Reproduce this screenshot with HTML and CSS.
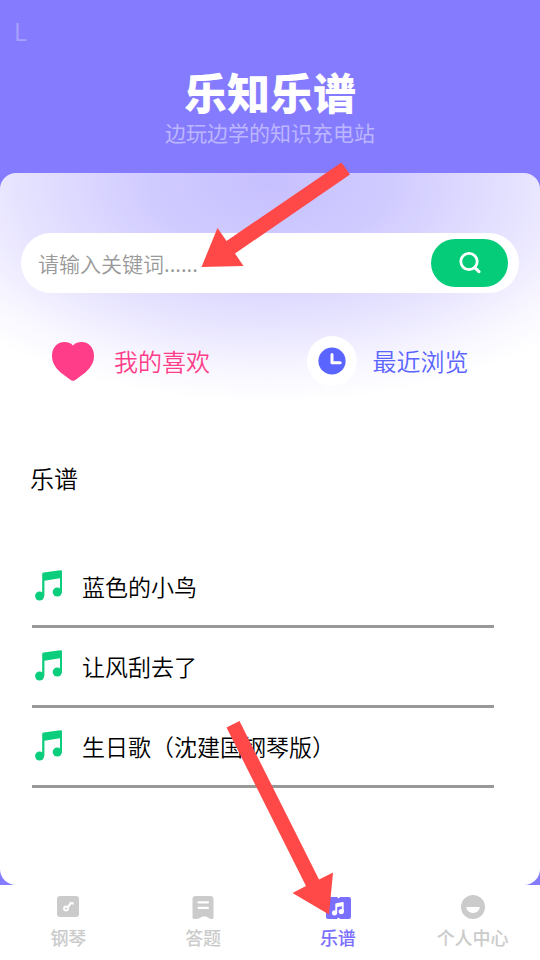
FILE: index.html
```html
<!DOCTYPE html>
<html lang="zh-CN">
<head>
<meta charset="utf-8">
<meta name="viewport" content="width=device-width, initial-scale=1">
<title>乐知乐谱</title>
<link rel="stylesheet" href="styles.css">
</head>
<body>
<div class="app">
  <header class="header">
    <span class="mark">L</span>
    <h1 class="title">乐知乐谱</h1>
    <p class="subtitle">边玩边学的知识充电站</p>
  </header>

  <main class="panel">
    <form class="search">
      <input class="search-input" type="text" placeholder="请输入关键词......" aria-label="请输入关键词">
      <button class="search-button" type="button" aria-label="搜索">
        <svg width="24" height="24" viewBox="0 0 24 24" fill="none" stroke="#fff" stroke-width="2.800"><circle cx="11" cy="10.500" r="8.200"/><path d="M16.800 16.600l4.200 4" stroke-width="3.200" stroke-linecap="round"/></svg>
      </button>
    </form>

    <div class="shortcuts">
      <a class="shortcut favourite" href="#">
        <span class="shortcut-icon">
          <svg width="44" height="42" viewBox="0 0 44 42"><path fill="#ff3d89" d="M22 5.400C24.300 3 27.500 2 30.500 2 38 2 43 8 43 15.800c0 6.700-3.200 12-8.600 16.600L25 39.600c-2 1.600-4 1.600-6 0l-9.400-7.200C4.200 27.800 1 22.500 1 15.800 1 8 6 2 13.500 2c3 0 6.200 1 8.500 3.400z"/></svg>
        </span>
        我的喜欢
      </a>
      <a class="shortcut recent" href="#">
        <span class="shortcut-icon disc">
          <svg width="28" height="28" viewBox="0 0 28 28"><circle cx="14" cy="14" r="13.600" fill="#5a64ff"/><path d="M14 7.500v8.300h8.200" fill="none" stroke="#fff" stroke-width="3" stroke-linecap="round" stroke-linejoin="round"/></svg>
        </span>
        最近浏览
      </a>
    </div>

    <h2 class="section-title">乐谱</h2>
    <ul class="scores">
      <li><a class="score" href="#"><svg class="note" viewBox="0 0 28 32"><use href="#note"/></svg>蓝色的小鸟</a></li>
      <li><a class="score" href="#"><svg class="note" viewBox="0 0 28 32"><use href="#note"/></svg>让风刮去了</a></li>
      <li><a class="score" href="#"><svg class="note" viewBox="0 0 28 32"><use href="#note"/></svg>生日歌（沈建国钢琴版）</a></li>
    </ul>

    <svg class="arrow arrow-search" width="152" height="108" viewBox="0 0 152 108" aria-hidden="true"><path fill="#ff4848" d="M141.500 2.500l8.500 12-115 79 8.500 12.500-42 1 16-39 9 13z"/></svg>
  </main>

  <nav class="tabs">
    <a class="tab" href="#">
      <svg width="28" height="28" viewBox="0 0 28 28"><rect x="3" y="3" width="22" height="21" rx="3" fill="#cbcbcb"/><circle cx="12" cy="15.500" r="2" fill="none" stroke="#fff" stroke-width="1.800"/><path d="M13.600 14.300l3.300-4.300 2.800.6" fill="none" stroke="#fff" stroke-width="2.200"/></svg>
      钢琴
    </a>
    <a class="tab" href="#">
      <svg width="28" height="28" viewBox="0 0 28 28"><path fill="#cbcbcb" d="M6.500 3h15q3 0 3 3v18.500q0 1.500-1.800 1.500-1.700 0-3.400-1.200-1.800-1.400-3-1.400h-2q-1.200 0-3 1.400Q9.600 26 5.500 26q-2 0-2-1.500V6q0-3 3-3z"/><path d="M9.500 9.300h9.500M9.500 14.800h9.500" stroke="#fff" stroke-width="2.200" stroke-linecap="round"/></svg>
      答题
    </a>
    <a class="tab active" href="#" aria-current="page">
      <svg width="28" height="28" viewBox="0 0 28 28"><path fill="#7b6fff" d="M4.500 4h8.500q1.500 2.400 3 0H25q2 0 2 2v18q0 2-2 2h-9q-1.500-2.400-3 0H4q-2 0-2-2V6q0-2 2.500-2z"/><g fill="#fff"><path d="M11.300 11.200q0-.8.800-1l6.800-1.200q.8-.1.800.8v9h-1.900v-5.600l-4.600.8v6.200h-1.900z"/><circle cx="10.500" cy="19.800" r="2.600"/><circle cx="17.300" cy="18.600" r="2.600"/></g></svg>
      乐谱
    </a>
    <a class="tab" href="#">
      <svg width="28" height="28" viewBox="0 0 28 28"><circle cx="14" cy="14" r="12" fill="#cbcbcb"/><path fill="#fff" d="M7.200 14h13.600a6.800 6 0 0 1-13.600 0z"/></svg>
      个人中心
    </a>
    <svg class="arrow arrow-tab" width="110" height="196" viewBox="0 0 110 196" aria-hidden="true"><path fill="#ff4848" d="M15.500 2l-13 6.500 79.500 158.500-13.500 7 36.500 21.500 4-42-14 7z"/></svg>
  </nav>
</div>

<svg width="0" height="0" class="defs" aria-hidden="true">
  <symbol id="note" viewBox="0 0 28 32"><g fill="#0ace7b"><path d="M7.200 4Q7.200 2.600 8.600 2.400L25.500.2Q27 0 27 1.400V22.500h-2V8.300L9.400 10.800V26H7.200z"/><circle cx="4.600" cy="26" r="4.500"/><circle cx="22.300" cy="22" r="4.600"/></g></symbol>
</svg>
</body>
</html>
```
FILE: styles.css
```css
* {
  box-sizing: border-box;
}

body {
  margin: 0;
  background: #857bff;
  color: #000;
  font-family: "Noto Sans CJK SC", "Noto Sans", sans-serif;
  font-weight: 350;
}

a {
  color: inherit;
  text-decoration: none;
}

.defs {
  position: absolute;
}

.app {
  display: flex;
  flex-direction: column;
  min-height: 100vh;
}

.header {
  position: relative;
  padding: 66px 16px 25px;
  text-align: center;
}

.mark {
  position: absolute;
  left: 14px;
  top: 15px;
  color: #a9a1ff;
  font-size: 24px;
  line-height: 32px;
}

.title {
  margin: 0;
  color: #fff;
  font-size: 43px;
  font-weight: 900;
  line-height: 50px;
}

.subtitle {
  margin: 0;
  color: #bcb6ff;
  font-size: 21px;
  font-weight: 400;
  line-height: 32px;
}

.panel {
  position: relative;
  flex: 1;
  padding: 60px 21px 32px;
  border-radius: 16px;
  background: radial-gradient(ellipse 400px 220px at 50% 10px, #c7c0ff 0%, #d0cbff 30%, #e8e5ff 66%, #f8f7ff 86%, #fff 100%) #fff;
}

.search {
  display: flex;
  align-items: center;
  height: 60px;
  padding: 0 11px 0 17px;
  border-radius: 30px;
  background: #fff;
}

.search-input {
  flex: 1;
  min-width: 0;
  padding: 0;
  border: 0;
  outline: 0;
  background: none;
  font: inherit;
  font-size: 21px;
}

.search-input::placeholder {
  color: #999;
}

.search-button {
  display: grid;
  place-items: center;
  width: 77px;
  height: 48px;
  padding: 0;
  border: 0;
  border-radius: 24px;
  background: #04cc78;
}

.shortcuts {
  display: grid;
  grid-template-columns: 1fr 1fr;
  gap: 20px;
  padding: 43px 0 0 27px;
}

.shortcut {
  display: flex;
  align-items: center;
  gap: 16px;
  font-size: 24px;
  line-height: 50px;
}

.favourite {
  color: #ff3d89;
}

.recent {
  padding-left: 13px;
  color: #5a64ff;
}

.shortcut-icon {
  display: grid;
  place-items: center;
  width: 50px;
  height: 50px;
}

.disc {
  border-radius: 50%;
  background: #fff;
}

.section-title {
  margin: 74px 0 0 9px;
  font-size: 24px;
  font-weight: inherit;
  line-height: 36px;
}

.scores {
  margin: 52px 25px 0 11px;
  padding: 0;
  list-style: none;
}

.score {
  display: flex;
  align-items: center;
  gap: 19px;
  height: 80px;
  padding: 0 0 2px 3px;
  border-bottom: 3px solid #999;
  font-size: 23px;
}

.note {
  width: 28px;
  height: 32px;
}

.tabs {
  position: relative;
  display: grid;
  grid-template-columns: repeat(4, 1fr);
  height: 75px;
  padding: 8px 0 0 1px;
  background: #fff;
}

.tab {
  display: flex;
  flex-direction: column;
  align-items: center;
  gap: 3px;
  color: #cbcbcb;
  font-size: 18px;
  font-weight: 500;
  line-height: 27px;
}

.active {
  color: #7b6fff;
}

.arrow {
  position: absolute;
  pointer-events: none;
}

.arrow-search {
  left: calc(50% - 70px);
  top: -13px;
}

.arrow-tab {
  left: calc(50% - 46px);
  bottom: 45px;
}
```
